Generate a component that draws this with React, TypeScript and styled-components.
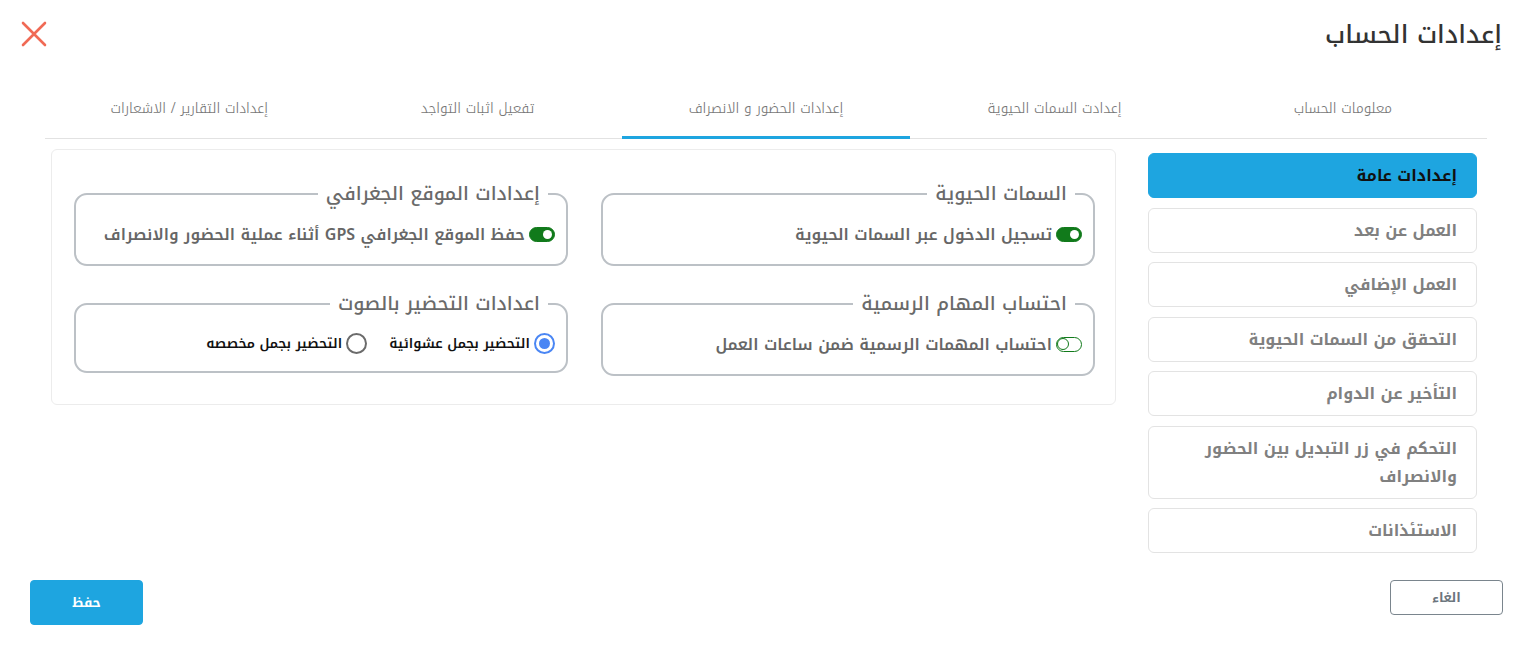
import React, { useState } from 'react';
import styled, { createGlobalStyle, css } from 'styled-components';

const GlobalStyle = createGlobalStyle`
    html, body {
        margin: 0;
        padding: 0;
        background: #fff;
    }
    body {
        font-family: "Noto Kufi Arabic", "Noto Sans Arabic", "DejaVu Sans", sans-serif;
        color: #333;
    }
    * { box-sizing: border-box; }
`;

const Page = styled.div`
    direction: rtl;
    width: 1529px;
    height: 647px;
    display: flex;
    flex-direction: column;
`;

const Header = styled.div`
    display: flex;
    justify-content: space-between;
    align-items: center;
    padding: 12px 27px 0 20px;
    height: 56px;
`;

const Title = styled.h1`
    margin: 0;
    font-size: 25px;
    font-weight: 500;
    color: #333;
`;

const CloseBtn = styled.button`
    border: 0;
    background: none;
    padding: 0;
    width: 28px;
    height: 28px;
    cursor: pointer;
    display: flex;
    align-items: center;
    justify-content: center;
`;

const Tabs = styled.div`
    display: grid;
    grid-template-columns: repeat(5, 1fr);
    margin: 26px 42px 0 45px;
    border-bottom: 1px solid #e2e2e2;
`;

const Tab = styled.div<{ active?: boolean }>`
    height: 57px;
    display: flex;
    align-items: center;
    justify-content: center;
    font-size: 14px;
    font-weight: 300;
    color: #777;
    border-bottom: 3px solid transparent;
    margin-bottom: -1px;
    padding-bottom: 2px;
    ${({ active }) => active && css`
        border-bottom-color: #1ea5e0;
    `}
`;

const Body = styled.div`
    display: flex;
    align-items: flex-start;
    gap: 32px;
    padding: 10px 52px 0 51px;
`;

const Sidebar = styled.div`
    width: 329px;
    flex-shrink: 0;
    display: flex;
    flex-direction: column;
    gap: 9.5px;
    margin-top: 4px;
`;

const SideItem = styled.div<{ active?: boolean }>`
    min-height: 45px;
    padding: 8px 19px 7px 16px;
    border: 1px solid #e3e3e3;
    border-radius: 6px;
    font-size: 16px;
    font-weight: 700;
    line-height: 28px;
    color: #808080;
    ${({ active }) => active && css`
        background: #1ea5e0;
        border-color: #1ea5e0;
        color: #111;
    `}
`;

const Panel = styled.div`
    flex: 1;
    border: 1px solid #ececec;
    border-radius: 6px;
    padding: 32px 20px 28px 22px;
    display: grid;
    grid-template-columns: 1fr 1fr;
    column-gap: 33px;
    row-gap: 26px;
    align-items: start;
`;

const Group = styled.fieldset`
    margin: 0;
    border: 2px solid #bcc1c6;
    border-radius: 13px;
    padding: 13px 11px 14px 12px;
    min-width: 0;
`;

const Legend = styled.legend`
    font-size: 19px;
    font-weight: 500;
    color: #6a6a6a;
    padding: 0 8px;
    margin-right: 7px;
    line-height: 24px;
`;

const Row = styled.div`
    display: flex;
    align-items: center;
    gap: 22px;
    min-height: 28px;
`;

const Option = styled.label<{ strong?: boolean }>`
    display: flex;
    align-items: center;
    gap: 4px;
    font-size: ${({ strong }) => (strong ? '13.5px' : '16px')};
    font-weight: 600;
    color: ${({ strong }) => (strong ? '#111' : '#666')};
    cursor: pointer;
`;

const Switch = styled.span<{ on: boolean }>`
    position: relative;
    width: 26px;
    height: 15px;
    border-radius: 8px;
    border: 1.5px solid #117a1b;
    background: ${({ on }) => (on ? '#117a1b' : '#fff')};
    flex-shrink: 0;
    &::after {
        content: '';
        position: absolute;
        border-radius: 50%;
        ${({ on }) => on
            ? css`
                top: 1.5px;
                right: 2px;
                width: 9px;
                height: 9px;
                background: #fff;
            `
            : css`
                top: -0.5px;
                left: -0.5px;
                width: 10px;
                height: 10px;
                border: 1.5px solid #117a1b;
            `}
    }
`;

const Radio = styled.span<{ checked: boolean }>`
    width: 21px;
    height: 21px;
    border-radius: 50%;
    border: 2px solid ${({ checked }) => (checked ? '#4a86f4' : '#6b6b6b')};
    display: flex;
    align-items: center;
    justify-content: center;
    flex-shrink: 0;
    &::after {
        content: '';
        width: 11px;
        height: 11px;
        border-radius: 50%;
        background: ${({ checked }) => (checked ? '#4a86f4' : 'transparent')};
    }
`;

const Footer = styled.div`
    margin-top: auto;
    display: flex;
    justify-content: space-between;
    align-items: flex-start;
    padding: 0 26px 22px 30px;
`;

const Button = styled.button<{ primary?: boolean }>`
    font-family: inherit;
    font-weight: 700;
    font-size: 13px;
    border-radius: 4px;
    cursor: pointer;
    width: 113px;
    ${({ primary }) => primary
        ? css`
            height: 45px;
            background: #1ea5e0;
            border: 1px solid #1ea5e0;
            color: #fff;
        `
        : css`
            height: 35px;
            background: #fff;
            border: 1px solid #7a858d;
            color: #6c757d;
        `}
`;

const tabs = [
    'معلومات الحساب',
    'إعدادت السمات الحيوية',
    'إعدادات الحضور و الانصراف',
    'تفعيل اثبات التواجد',
    'إعدادات التقارير / الاشعارات',
];

const sideItems = [
    'إعدادات عامة',
    'العمل عن بعد',
    'العمل الإضافي',
    'التحقق من السمات الحيوية',
    'التأخير عن الدوام',
    'التحكم في زر التبديل بين الحضور والانصراف',
    'الاستئذانات',
];

const App = () => {
    const [bio, setBio] = useState(true);
    const [gps, setGps] = useState(true);
    const [tasks, setTasks] = useState(false);
    const [voice, setVoice] = useState('random');

    return <>
        <GlobalStyle />
        <Page>
            <Header>
                <Title>إعدادات الحساب</Title>
                <CloseBtn aria-label="close">
                    <svg width="26" height="26" viewBox="0 0 26 26">
                        <path d="M2 2 L24 24 M24 2 L2 24" stroke="#f06a55" strokeWidth="2.6" strokeLinecap="round" />
                    </svg>
                </CloseBtn>
            </Header>
            <Tabs>
                {tabs.map((t, i) => <Tab key={t} active={i === 2}>{t}</Tab>)}
            </Tabs>
            <Body>
                <Sidebar>
                    {sideItems.map((s, i) => <SideItem key={s} active={i === 0}>{s}</SideItem>)}
                </Sidebar>
                <Panel>
                    <Group>
                        <Legend>السمات الحيوية</Legend>
                        <Row>
                            <Option onClick={() => setBio(!bio)}><Switch on={bio} />تسجيل الدخول عبر السمات الحيوية</Option>
                        </Row>
                    </Group>
                    <Group>
                        <Legend>إعدادات الموقع الجغرافي</Legend>
                        <Row>
                            <Option onClick={() => setGps(!gps)}><Switch on={gps} />حفظ الموقع الجغرافي GPS أثناء عملية الحضور والانصراف</Option>
                        </Row>
                    </Group>
                    <Group>
                        <Legend>احتساب المهام الرسمية</Legend>
                        <Row>
                            <Option onClick={() => setTasks(!tasks)}><Switch on={tasks} />احتساب المهمات الرسمية ضمن ساعات العمل</Option>
                        </Row>
                    </Group>
                    <Group>
                        <Legend>اعدادات التحضير بالصوت</Legend>
                        <Row>
                            <Option strong onClick={() => setVoice('random')}><Radio checked={voice === 'random'} />التحضير بجمل عشوائية</Option>
                            <Option strong onClick={() => setVoice('custom')}><Radio checked={voice === 'custom'} />التحضير بجمل مخصصه</Option>
                        </Row>
                    </Group>
                </Panel>
            </Body>
            <Footer>
                <Button>الغاء</Button>
                <Button primary>حفظ</Button>
            </Footer>
        </Page>
    </>;
};

export default App;
